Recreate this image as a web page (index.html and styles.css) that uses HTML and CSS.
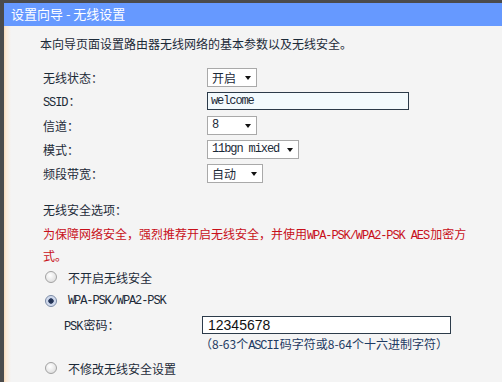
FILE: index.html
```
<!doctype html>
<html lang="zh-CN">
    <head>
        <meta charset="UTF-8" />
        <title>设置向导 - 无线设置</title>
        <link rel="stylesheet" href="styles.css">
    </head>
    <body>
        <div class="page">
            <div class="title-bar">设置向导 - 无线设置</div>

            <p class="intro">本向导页面设置路由器无线网络的基本参数以及无线安全。</p>

            <!-- basic settings -->
            <div class="form">
                <div class="row">
                    <span class="label">无线状态：</span>
                    <span class="select w50">开启</span>
                </div>
                <div class="row">
                    <span class="label"><span class="mono inline">SSID</span>：</span>
                    <span class="text-input ssid mono">welcome</span>
                </div>
                <div class="row">
                    <span class="label">信道：</span>
                    <span class="select w50 mono">8</span>
                </div>
                <div class="row">
                    <span class="label">模式：</span>
                    <span class="select w92 mono">11bgn mixed</span>
                </div>
                <div class="row">
                    <span class="label">频段带宽：</span>
                    <span class="select w56">自动</span>
                </div>
            </div>

            <!-- security -->
            <div class="security">
                <div class="section-title">无线安全选项：</div>
                <p class="warning">为保障网络安全，强烈推荐开启无线安全，并使用<span class="mono inline">WPA-PSK/WPA2-PSK AES</span>加密方式。</p>

                <div class="radio-row">
                    <span class="radio"></span>
                    <span>不开启无线安全</span>
                </div>
                <div class="radio-row">
                    <span class="radio checked"></span>
                    <span class="mono">WPA-PSK/WPA2-PSK</span>
                </div>
                <div class="psk-row">
                    <span class="psk-label"><span class="mono inline">PSK</span>密码：</span>
                    <span class="text-input psk">12345678</span>
                </div>
                <div class="hint">（8-63个<span class="mono inline">ASCII</span>码字符或8-64个十六进制字符）</div>
                <div class="radio-row last">
                    <span class="radio"></span>
                    <span>不修改无线安全设置</span>
                </div>
            </div>
        </div>
    </body>
</html>
```

FILE: styles.css
```
body {
    margin: 0;
    padding: 3px 0 0 4px;
    background: #4b4b4b;
    font-family: "Noto Sans CJK SC", "Liberation Sans", sans-serif;
    font-size: 12px;
    color: #1c2a38;
    height: 379px;
    overflow: hidden;
}
.page {
    height: 100%;
    background: linear-gradient(to right, #f7d9b8 0, #fbe9d6 2px, #f6efe8 5px, #f4f4f4 7px);
}
.title-bar {
    height: 23px;
    line-height: 22px;
    padding-left: 7px;
    background: #6699ff;
    color: #fff;
    font-size: 13px;
}
.mono {
    font-family: "Liberation Mono", monospace;
    font-size: 12px;
    letter-spacing: -1.1px;
}
.mono.inline {
    margin-right: 1.1px;
}
.intro {
    margin: 6px 0 0 36px;
    line-height: 24px;
}
.form {
    margin-top: 9px;
    padding-left: 39px;
}
.row {
    display: grid;
    grid-template-columns: 164px auto;
    align-items: center;
    height: 24px;
}
.select {
    position: relative;
    box-sizing: border-box;
    height: 19px;
    line-height: 17px;
    padding-left: 4px;
    background: #fff;
    border: 1px solid #a9a9a9;
}
.select::after {
    content: "";
    position: absolute;
    right: 5px;
    top: 7px;
    border-left: 3.5px solid transparent;
    border-right: 3.5px solid transparent;
    border-top: 4px solid #111;
}
.w50 { width: 50px; }
.w56 { width: 56px; }
.w92 { width: 92px; }
.text-input {
    box-sizing: border-box;
    height: 18px;
    line-height: 16px;
    padding-left: 3px;
    border: 1px solid #2c3b4a;
}
.ssid {
    width: 202px;
    background: #f3fafd;
}
.security {
    margin-top: 13px;
    padding-left: 39px;
}
.section-title {
    line-height: 24px;
}
.warning {
    margin: 2px 0 0;
    width: 440px;
    line-height: 19px;
    color: #c8101a;
}
.radio-row {
    display: flex;
    align-items: center;
    gap: 11px;
    height: 24px;
    padding-left: 2px;
}
.radio-row:first-of-type {
    margin-top: 2px;
}
.radio {
    box-sizing: border-box;
    width: 12px;
    height: 12px;
    border-radius: 50%;
    border: 1px solid #a2a2a2;
    background: radial-gradient(circle at 40% 35%, #fff 0, #e2e2e2 70%, #cfcfcf 100%);
}
.radio.checked {
    border-color: #7a8aa6;
    background: radial-gradient(circle, #1f2f4f 0, #2a3a5c 2.4px, #c9d4ea 3px, #e6ebf4 100%);
}
.psk-row {
    display: flex;
    align-items: center;
    height: 23px;
    padding-left: 21px;
}
.psk-label {
    width: 138px;
}
.psk {
    width: 249px;
    background: #fff;
    font-family: "Liberation Sans", sans-serif;
    font-size: 14px;
    padding-left: 5px;
    color: #111;
}
.hint {
    margin-left: 157px;
    line-height: 16px;
    color: #1d3a62;
}
.radio-row.last {
    margin-top: 2px;
}
```
